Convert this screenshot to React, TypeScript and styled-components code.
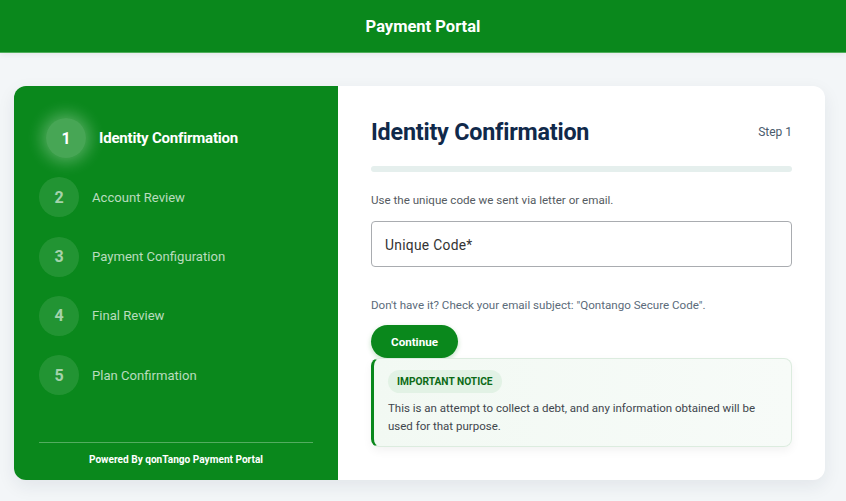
import styled, { createGlobalStyle } from 'styled-components';

const green = '#0a881c';

const GlobalStyle = createGlobalStyle`
  html, body {
    margin: 0;
    padding: 0;
    background: #f3f6f8;
    font-family: Roboto, 'Liberation Sans', sans-serif;
  }
`;

const steps = [
  'Identity Confirmation',
  'Account Review',
  'Payment Configuration',
  'Final Review',
  'Plan Confirmation'
];

const Header = styled.header`
  height: 52px;
  background: ${green};
  border-bottom: 1px solid #4fae5b;
  display: flex;
  align-items: center;
  justify-content: center;
  color: #fff;
  font-size: 16.5px;
  font-weight: 700;
  box-shadow: 0 2px 6px rgba(0, 0, 0, 0.06);
`;

const Main = styled.main`
  padding: 33px 21px 20px 14px;
`;

const Card = styled.div`
  display: flex;
  border-radius: 12px;
  overflow: hidden;
  background: #fff;
  box-shadow: 0 6px 18px rgba(20, 40, 60, 0.08);
`;

const Sidebar = styled.aside`
  width: 324px;
  flex-shrink: 0;
  background: ${green};
  padding: 32px 25px 15px;
  box-sizing: border-box;
  display: flex;
  flex-direction: column;
`;

const StepList = styled.ol`
  list-style: none;
  margin: 0;
  padding: 0;
  display: flex;
  flex-direction: column;
  gap: 19.3px;
`;

const StepItem = styled.li<{ $active?: boolean }>`
  display: flex;
  align-items: center;
  gap: 13px;
  transform: ${(p) => (p.$active ? 'translateX(7px)' : 'none')};
`;

const StepCircle = styled.span<{ $active?: boolean }>`
  width: 40px;
  height: 40px;
  border-radius: 50%;
  display: flex;
  align-items: center;
  justify-content: center;
  font-size: 16px;
  font-weight: 700;
  color: ${(p) => (p.$active ? '#fff' : 'rgba(255,255,255,0.6)')};
  background: ${(p) => (p.$active ? 'rgba(255,255,255,0.25)' : 'rgba(255,255,255,0.1)')};
  box-shadow: ${(p) => (p.$active ? '0 0 16px 4px rgba(255,255,255,0.3)' : 'none')};
`;

const StepLabel = styled.span<{ $active?: boolean }>`
  font-size: ${(p) => (p.$active ? '15px' : '13.1px')};
  font-weight: ${(p) => (p.$active ? 700 : 400)};
  color: ${(p) => (p.$active ? '#fff' : 'rgba(255,255,255,0.72)')};
  letter-spacing: ${(p) => (p.$active ? '-0.2px' : '0')};
`;

const SidebarFooter = styled.div`
  margin-top: auto;
  border-top: 1px solid rgba(255, 255, 255, 0.3);
  padding-top: 11px;
  text-align: center;
  color: #fff;
  font-size: 10.1px;
  font-weight: 700;
`;

const Content = styled.section`
  flex: 1;
  padding: 32px 33px 33px;
  display: flex;
  flex-direction: column;
`;

const TitleRow = styled.div`
  display: flex;
  justify-content: space-between;
  align-items: center;
`;

const Title = styled.h1`
  margin: 0;
  font-size: 23.3px;
  font-weight: 700;
  color: #10294a;
  line-height: 28px;
  letter-spacing: -0.2px;
`;

const StepTag = styled.span`
  font-size: 12px;
  color: #4a5b6c;
`;

const Progress = styled.div`
  margin-top: 20px;
  height: 6px;
  border-radius: 3px;
  background: #e5efed;
`;

const Text = styled.p<{ $muted?: boolean }>`
  margin: 0;
  font-size: 11.6px;
  line-height: 14px;
  color: ${(p) => (p.$muted ? '#5b6b7a' : '#555b61')};
`;

const Desc = styled(Text)`
  margin-top: 21px;
`;

const Input = styled.input`
  margin-top: 14px;
  height: 46px;
  box-sizing: border-box;
  border: 1px solid #a9acb0;
  border-radius: 4px;
  padding: 2px 13px 0;
  font-family: inherit;
  font-size: 13.8px;
  letter-spacing: 0.3px;
  outline: none;
  &::placeholder {
    color: #333;
  }
`;

const Hint = styled(Text)`
  margin-top: 31px;
`;

const Button = styled.button`
  margin-top: 13px;
  align-self: flex-start;
  width: 87px;
  height: 33px;
  border: none;
  border-radius: 17px;
  background: ${green};
  color: #fff;
  font-family: inherit;
  font-size: 11.6px;
  font-weight: 700;
  box-shadow: 0 2px 5px rgba(10, 136, 28, 0.25);
`;

const Notice = styled.div`
  display: flex;
  flex-direction: column;
  align-items: flex-start;
  background: linear-gradient(90deg, #f2f9f3, #f7fbf8);
  border: 1px solid #dcecdf;
  border-left: 3px solid ${green};
  border-radius: 8px;
  padding: 11px 16px 11px 14px;
  box-shadow: 0 4px 10px rgba(0, 0, 0, 0.05);
`;

const Badge = styled.span`
  display: flex;
  align-items: center;
  height: 23px;
  box-sizing: border-box;
  background: #e2f2e5;
  color: #0c6a17;
  font-size: 10.2px;
  font-weight: 700;
  padding: 0 9px;
  border-radius: 12px;
`;

const NoticeText = styled.p`
  margin: 6px 0 0;
  font-size: 11.5px;
  line-height: 18px;
  color: #3f464d;
`;

export default function App() {
  return (
    <>
      <GlobalStyle />
      <Header>Payment Portal</Header>
      <Main>
        <Card>
          <Sidebar>
            <StepList>
              {steps.map((s, i) => (
                <StepItem key={s} $active={i === 0}>
                  <StepCircle $active={i === 0}>{i + 1}</StepCircle>
                  <StepLabel $active={i === 0}>{s}</StepLabel>
                </StepItem>
              ))}
            </StepList>
            <SidebarFooter>Powered By qonTango Payment Portal</SidebarFooter>
          </Sidebar>
          <Content>
            <TitleRow>
              <Title>Identity Confirmation</Title>
              <StepTag>Step 1</StepTag>
            </TitleRow>
            <Progress />
            <Desc>Use the unique code we sent via letter or email.</Desc>
            <Input placeholder="Unique Code*" />
            <Hint $muted>Don't have it? Check your email subject: "Qontango Secure Code".</Hint>
            <Button>Continue</Button>
            <Notice>
              <Badge>IMPORTANT NOTICE</Badge>
              <NoticeText>
                This is an attempt to collect a debt, and any information obtained will be used for that
                purpose.
              </NoticeText>
            </Notice>
          </Content>
        </Card>
      </Main>
    </>
  );
}
